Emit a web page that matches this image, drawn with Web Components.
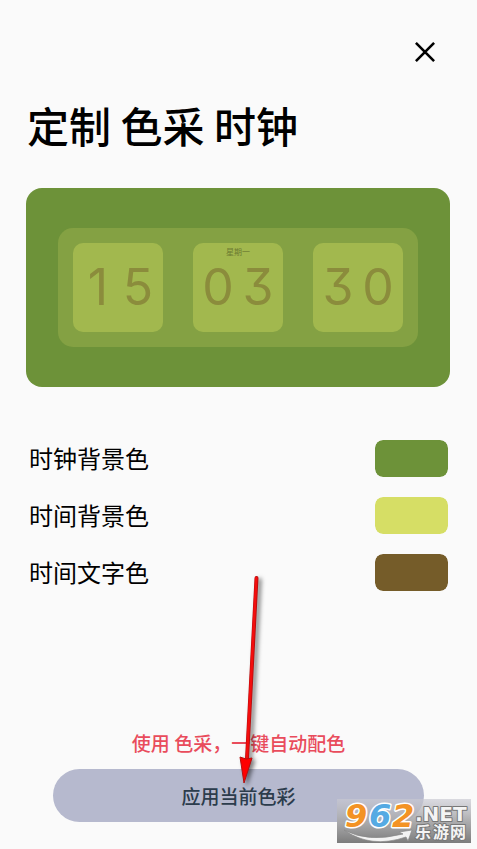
<!DOCTYPE html>
<html lang="zh-CN">
<head>
<meta charset="utf-8">
<meta name="viewport" content="width=device-width, initial-scale=1">
<title>定制 色采 时钟</title>
<style>
body{margin:0;background:#fafafa;color:#000;font-family:"Noto Sans CJK SC",sans-serif}
</style>
</head>
<body>
<clock-customizer></clock-customizer>
<script>
const define = (name, html, setup) => {
  const template = document.createElement('template');
  template.innerHTML = html;
  customElements.define(name, class extends HTMLElement {
    constructor() {
      super();
      this.attachShadow({mode: 'open'}).append(template.content.cloneNode(true));
    }
    connectedCallback() { if (setup) setup(this, this.shadowRoot); }
  });
};

define('close-button', `
<style>
:host{display:block}
button{display:block;padding:10px;border:0;background:none;color:#000;cursor:pointer}
svg{display:block}
</style>
<button type="button" aria-label="关闭"><svg width="20" height="20" viewBox="0 0 20 20" fill="none" stroke="currentColor" stroke-width="2.6"><path d="M.9.9 19.1 19.1M19.1.9.9 19.1"/></svg></button>`);

define('clock-tile', `
<style>
:host{display:block;flex:1;position:relative;border-radius:10px;background:#a2b84e;color:#8b8c3c}
.digits{display:grid;grid-template-columns:40px 40px;justify-content:center;align-content:center;box-sizing:border-box;height:89px;padding-bottom:2px;text-align:center;font:400 50px/60px Inter,sans-serif;font-feature-settings:"cv09" 1}
.day{position:absolute;top:4px;left:0;right:0;text-align:center;font-size:8px;line-height:10px;color:#6c7a32}
</style>
<div class="day"><slot></slot></div>
<div class="digits"></div>`, (host, root) => {
  root.querySelector('.digits').replaceChildren(...[...host.getAttribute('value')].map(d => {
    const s = document.createElement('span');
    s.textContent = d;
    return s;
  }));
});

define('clock-preview', `
<style>
:host{display:block;padding:40px 32px;border-radius:16px;background:#6d9239}
.panel{display:flex;gap:30px;padding:15px;border-radius:15px;background:#84a143}
</style>
<div class="panel"><slot></slot></div>`);

define('color-row', `
<style>
:host{display:block}
label{display:flex;align-items:flex-start;justify-content:space-between;height:37px;font-size:24px;line-height:36px}
input{appearance:none;-webkit-appearance:none;width:73px;height:37px;margin:0;padding:0;border:0;border-radius:8px;overflow:hidden;background:none;cursor:pointer}
input::-webkit-color-swatch-wrapper{padding:0}
input::-webkit-color-swatch{border:0;border-radius:8px}
</style>
<label><span><slot></slot></span><input type="color"></label>`, (host, root) => {
  root.querySelector('input').value = host.getAttribute('color');
});

define('apply-button', `
<style>
:host{display:block}
button{display:block;width:100%;height:53px;padding:0;border:0;border-radius:27px;background:#b6b9ce;color:#2c3c4c;font:500 19px/28px "Noto Sans CJK SC",sans-serif;cursor:pointer}
</style>
<button type="button"><slot></slot></button>`);

define('pointer-arrow', `
<style>
:host{display:block;pointer-events:none}
svg{display:block;overflow:visible;filter:drop-shadow(3px 2px 2px rgba(0,0,0,.5))}
</style>
<svg width="24" height="210" viewBox="0 0 24 210" aria-hidden="true"><path d="M18.5 3 9 184" stroke="#b40f10" stroke-width="4" stroke-linecap="round"/><path d="M18.3 3 8.8 184" stroke="#f30d0d" stroke-width="2.6" stroke-linecap="round"/><path d="M2 182 8 184 14 183 6 208Z" fill="#f00" stroke="#b40f10"/></svg>`);

define('site-mark', `
<style>
:host{display:block;pointer-events:none}
svg{display:block;overflow:visible}
text{paint-order:stroke;stroke-linejoin:round}
.num{font:italic 700 32px "DejaVu Sans",sans-serif;stroke:#fff;stroke-width:3px}
.net{font:700 20px "DejaVu Sans",sans-serif;fill:#f4f4f4;stroke:#777;stroke-width:2px}
.cn{font:700 16px "Noto Sans CJK SC",sans-serif;fill:#f4f4f4;stroke:#777;stroke-width:2px}
</style>
<svg width="134" height="44" viewBox="0 0 134 44">
<defs><linearGradient id="g" x2="0" y2="1"><stop stop-color="#c9c9d2" stop-opacity=".65"/><stop offset=".5" stop-color="#a9a9ab" stop-opacity=".95"/><stop offset="1" stop-color="#7c7c7c"/></linearGradient></defs>
<rect width="134" height="44" fill="url(#g)"/>
<path d="M7 31Q31 44 66 35L62 33 75 31 71 42 69 38Q34 50 7 31Z" fill="#f3f3f3" stroke="#888" stroke-width=".7"/>
<text class="num" y="28"><tspan x="8" fill="#f39325">9</tspan><tspan x="32" fill="#55aae3">6</tspan><tspan x="55" fill="#f39325">2</tspan></text>
<text class="net" x="78" y="22">.NET</text>
<text class="cn" y="39"><tspan x="78">乐</tspan><tspan x="96">游</tspan><tspan x="113">网</tspan></text>
</svg>`);

define('clock-customizer', `
<style>
:host{display:block}
main{position:relative;display:flex;flex-direction:column;box-sizing:border-box;min-height:100vh;padding:32px 27px 27px 26px}
header{display:flex;justify-content:flex-end;padding-right:5px}
h1{margin:21px 0 0;padding-left:1px;font-size:42px;line-height:64px;font-weight:500}
clock-preview{margin-top:31px}
.colors{display:grid;gap:20px;padding:0 2px 0 3px;margin-top:53px}
footer{position:relative;margin-top:auto;padding:120px 26px 0 27px}
p{margin:0 0 12px;text-align:center;color:#e94c5c;font-size:19px;line-height:28px;font-weight:500}
pointer-arrow{position:absolute;left:50%;bottom:37px}
site-mark{position:absolute;right:6px;bottom:6px}
</style>
<main>
<header><close-button></close-button></header>
<h1>定制 色采 时钟</h1>
<clock-preview><clock-tile value="15"></clock-tile><clock-tile value="03">星期一</clock-tile><clock-tile value="30"></clock-tile></clock-preview>
<div class="colors">
<color-row color="#6d9239">时钟背景色</color-row>
<color-row color="#d6de65">时间背景色</color-row>
<color-row color="#755c29">时间文字色</color-row>
</div>
<footer>
<p>使用 色采，一键自动配色</p>
<apply-button>应用当前色彩</apply-button>
<pointer-arrow></pointer-arrow>
</footer>
<site-mark></site-mark>
</main>`);
</script>
</body>
</html>
